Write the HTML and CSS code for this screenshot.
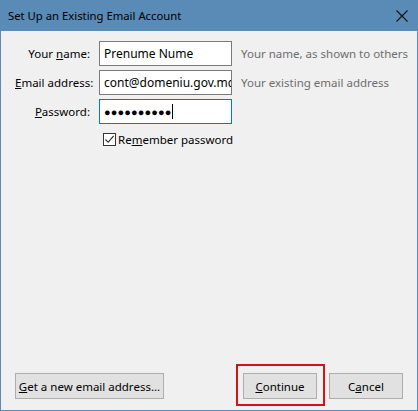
FILE: index.html
```html
<!DOCTYPE html>
<html>
<head>
<meta charset="utf-8">
<link rel="stylesheet" href="styles.css">
</head>
<body>
<div class="window">
  <div class="titlebar">
    <span class="title">Set Up an Existing Email Account</span>
    <svg class="close" width="12" height="12" viewBox="0 0 12 12"><path d="M0.5 0.5 L11.5 11.5 M11.5 0.5 L0.5 11.5" stroke="#111" stroke-width="1.1" fill="none"/></svg>
  </div>
  <div class="content">
    <div class="form">
      <label class="lbl">Your <u>n</u>ame:</label>
      <div class="input">Prenume Nume</div>
      <span class="hint">Your name, as shown to others</span>

      <label class="lbl"><u>E</u>mail address:</label>
      <div class="input">cont@domeniu.gov.md</div>
      <span class="hint">Your existing email address</span>

      <label class="lbl"><u>P</u>assword:</label>
      <div class="input focus"><span class="dots">●●●●●●●●●●</span><span class="caret"></span></div>
      <span></span>

      <span></span>
      <div class="check-row">
        <span class="checkbox"><svg width="11" height="11" viewBox="0 0 11 11"><path d="M1.5 5.5 L4.2 8.3 L9.6 1.8" stroke="#222" stroke-width="1.1" fill="none"/></svg></span>
        <span class="check-label">Re<u>m</u>ember password</span>
      </div>
      <span></span>
    </div>
  </div>
  <div class="footer">
    <button class="btn wide"><u>G</u>et a new email address...</button>
    <div class="spacer"></div>
    <button class="btn highlighted"><u>C</u>ontinue</button>
    <button class="btn">C<u>a</u>ncel</button>
  </div>
</div>
</body>
</html>
```
FILE: styles.css
```css
html, body {
  margin: 0;
  padding: 0;
  background: #f0f0f0;
}
body {
  font-family: "Noto Sans", "Open Sans", sans-serif;
  font-size: 11.5px;
  color: #000;
}
.window {
  width: 418px;
  height: 411px;
  box-sizing: border-box;
  border: 1px solid #5a8ab6;
  border-top: none;
  display: flex;
  flex-direction: column;
  background: #f0f0f0;
}
.titlebar {
  height: 31px;
  background: #5a8ab6;
  display: flex;
  align-items: center;
  justify-content: space-between;
  padding: 0 9px 0 8px;
  margin: 0 -1px;
}
.title {
  font-size: 11.3px;
  color: #000;
  line-height: 16px;
}
.close {
  margin-right: 1px;
}
.content {
  flex: 1;
  padding: 10px 0 0 14px;
}
.form {
  display: grid;
  grid-template-columns: 75px 133px auto;
  column-gap: 9px;
  row-gap: 4px;
  align-items: center;
}
.lbl {
  text-align: right;
  white-space: nowrap;
}
.input {
  height: 25px;
  box-sizing: border-box;
  border: 1px solid #7a7a7a;
  background: #fff;
  padding: 0 4px;
  display: flex;
  align-items: center;
  white-space: nowrap;
  overflow: hidden;
  font-size: 12px;
}
.input.focus {
  border-color: #0078d7;
}
.dots {
  font-size: 11px;
  letter-spacing: 0.1px;
}
.caret {
  display: inline-block;
  width: 1px;
  height: 15px;
  background: #000;
  margin-left: 1px;
}
.hint {
  color: #6d6d6d;
  white-space: nowrap;
  font-size: 11.5px;
}
.check-row {
  display: flex;
  align-items: center;
  margin-top: 4px;
  padding-left: 4px;
}
.checkbox {
  width: 13px;
  height: 13px;
  box-sizing: border-box;
  border: 1px solid #333;
  background: #fff;
  display: flex;
  align-items: center;
  justify-content: center;
  margin-right: 2px;
}
.check-label {
  font-size: 11.5px;
  white-space: nowrap;
}
.footer {
  display: flex;
  align-items: center;
  padding: 0 14px 11px 14px;
  gap: 12px;
}
.spacer {
  flex: 1;
}
.btn {
  height: 26px;
  box-sizing: border-box;
  border: 1px solid #adadad;
  background: #e1e1e1;
  font-family: "Noto Sans", "Open Sans", sans-serif;
  font-size: 11.5px;
  color: #000;
  padding: 0;
  width: 74px;
  position: relative;
  white-space: nowrap;
}
.btn.wide {
  width: 149px;
}
.btn.highlighted::after {
  content: "";
  position: absolute;
  top: -10px;
  bottom: -8px;
  left: -8px;
  right: -9px;
  border: 2px solid #d0121b;
}
```
